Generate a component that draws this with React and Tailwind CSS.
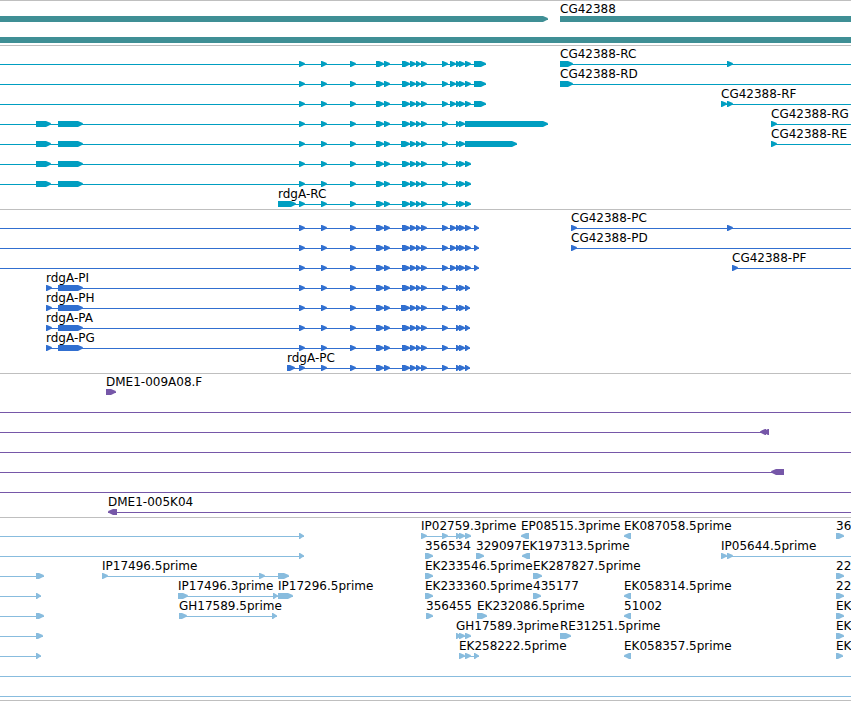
import React from 'react'

// exons shared by every rdgA transcript: [start, end]
const CORE = [[299, 305], [321, 327], [350, 356], [376, 384], [384, 390]]
const MID = [[402, 410], [410, 416], [416, 421], [421, 427], [442, 448]]
const MID_LONG = [[401, 410], ...MID.slice(1)]
const TAIL = [[456, 461], [459, 465]]
const HEAD = [[36, 51], [58, 83]]
const CDS_HEAD = [[46, 52], [58, 83]]

const rdgLong = (last) => ({ exons: [...CORE, ...MID, [450, 456], ...TAIL, [465, 471], last], start: 0 })
const rdg = (last, mid = MID) => ({ start: 0, exons: [...HEAD, ...CORE, ...mid, ...TAIL, last] })
const cds = (label, mid = MID) => ({ label, exons: [...CDS_HEAD, ...CORE, ...mid, ...TAIL, [465, 470]] })
const one = (label, start, end, reverse) => ({ label, exons: [[start, end]], reverse })

// a feature with open: true runs past the right edge of the view
const WHOLE = { start: 0, exons: [], open: true }

const tracks = [
  {
    name: 'gene',
    color: 'fill-[#3f8f95]',
    spacing: 'gap-px pb-0.5',
    rows: [
      [
        { exons: [[0, 548]] },
        { label: 'CG42388', exons: [[560, null]], open: true },
      ],
      [{ exons: [[0, null]], open: true }],
    ],
  },
  {
    name: 'mrna',
    color: 'fill-[#009ec1]',
    spacing: 'pb-0.5',
    rows: [
      [rdgLong([474, 486]), { label: 'CG42388-RC', exons: [[560, 573], [727, 733]], open: true }],
      [rdgLong([474, 486]), { label: 'CG42388-RD', exons: [[560, 573]], open: true }],
      [rdgLong([474, 486]), { label: 'CG42388-RF', exons: [[721, 727], [727, 733]], open: true }],
      [rdg([465, 548]), { label: 'CG42388-RG', exons: [[771, 777]], open: true }],
      [rdg([465, 517], MID_LONG), { label: 'CG42388-RE', exons: [[771, 777]], open: true }],
      [rdg([465, 471])],
      [rdg([465, 471])],
      [{ label: 'rdgA-RC', exons: [[278, 296], ...CORE, ...MID, ...TAIL, [465, 471]] }],
    ],
  },
  {
    name: 'cds',
    color: 'fill-[#316fd0]',
    spacing: 'pb-0.5',
    rows: [
      [rdgLong([474, 479]), { label: 'CG42388-PC', exons: [[571, 577], [727, 733]], open: true }],
      [rdgLong([474, 479]), { label: 'CG42388-PD', exons: [[571, 577]], open: true }],
      [rdgLong([474, 479]), { label: 'CG42388-PF', exons: [[732, 738]], open: true }],
      [cds('rdgA-PI')],
      [cds('rdgA-PH', MID_LONG)],
      [cds('rdgA-PA')],
      [cds('rdgA-PG')],
      [{ label: 'rdgA-PC', exons: [[287, 295], ...CORE, ...MID, ...TAIL, [465, 470]] }],
    ],
  },
  {
    name: 'bac',
    color: 'fill-[#7657a8]',
    spacing: 'pb-0.5',
    rows: [
      [one('DME1-009A08.F', 106, 116)],
      [WHOLE],
      [{ start: 0, exons: [[760, 766], [763, 769]], reverse: true }],
      [WHOLE],
      [{ start: 0, exons: [[771, 784]], reverse: true }],
      [WHOLE],
      [{ label: 'DME1-005K04', exons: [[108, 117]], reverse: true, open: true }],
    ],
  },
  {
    name: 'est',
    color: 'fill-[#88bcde]',
    spacing: 'pb-px',
    rows: [
      [
        { start: 0, exons: [[299, 304]] },
        { label: 'IP02759.3prime', exons: [[421, 427], [442, 448], [456, 461], [459, 465], [465, 471]] },
        one('EP08515.3prime', 521, 529, true),
        one('EK087058.5prime', 624, 631, true),
        one('36', 836, 844),
      ],
      [
        { start: 0, exons: [[299, 304]] },
        one('356534', 425, 433),
        one('329097', 476, 484),
        one('EK197313.5prime', 522, 530, true),
        { label: 'IP05644.5prime', exons: [[721, 727], [727, 733]], open: true },
      ],
      [
        { start: 0, exons: [[36, 44]] },
        { label: 'IP17496.5prime', exons: [[102, 108], [259, 265], [278, 289]] },
        one('EK233546.5prime', 425, 433),
        one('EK287827.5prime', 533, 542),
        one('22', 836, 844),
      ],
      [
        { start: 0, exons: [[36, 41]] },
        { label: 'IP17496.3prime', exons: [[178, 188], [273, 278]] },
        one('IP17296.5prime', 278, 293),
        one('EK233360.5prime', 425, 433),
        one('435177', 533, 541),
        one('EK058314.5prime', 624, 631, true),
        one('22', 836, 844),
      ],
      [
        { start: 0, exons: [[36, 44]] },
        { label: 'GH17589.5prime', exons: [[179, 187], [272, 277]] },
        one('356455', 426, 433),
        one('EK232086.5prime', 477, 487),
        one('51002', 624, 631, true),
        one('EK', 836, 844),
      ],
      [
        { start: 0, exons: [[36, 43]] },
        { label: 'GH17589.3prime', exons: [[456, 461], [459, 465], [465, 471]] },
        one('RE31251.5prime', 560, 571),
        one('EK', 836, 844),
      ],
      [
        { start: 0, exons: [[36, 41]] },
        { label: 'EK258222.5prime', exons: [[459, 465], [465, 471], [474, 479]] },
        one('EK058357.5prime', 624, 631, true),
        one('EK', 836, 843),
      ],
      [WHOLE],
      [WHOLE],
    ],
  },
]

const Exon = ({ start, end, reverse }) => {
  if (end === null) {
    return <rect x={start} y="14" width="100%" height="6" />
  }
  const tip = reverse ? start : end
  const base = reverse ? end : start
  const dir = reverse ? -1 : 1
  const neck = Math.abs(end - start) > 6 ? tip - 5 * dir : base + dir
  const cheek = tip - 2 * dir
  return <path d={`M${base} 14H${neck}L${cheek} 15.2L${tip} 16.4V17.6L${cheek} 18.6L${neck} 20H${base}Z`} />
}

const Feature = ({ label, start, exons, reverse, open }) => {
  const from = start ?? exons[0][0]
  const to = open ? null : exons[exons.length - 1][1]
  return (
    <g>
      <rect x={from} y="17" width={to === null ? '100%' : to - from} height="1" />
      {exons.map(([a, b]) => (
        <Exon key={a} start={a} end={b} reverse={reverse} />
      ))}
      {label && (
        <text x={from} y="11" className="fill-black">
          {label}
        </text>
      )}
    </g>
  )
}

const Track = ({ color, spacing, rows }) => (
  <section className={`flex flex-col border-t border-[#bfbfbf] pt-px ${spacing}`}>
    {rows.map((features, i) => (
      <svg key={i} className={`block h-5 w-full text-xs ${color}`}>
        {features.map((feature, j) => (
          <Feature key={j} {...feature} />
        ))}
      </svg>
    ))}
  </section>
)

const App = () => {
  return (
    <main className="overflow-hidden border-b border-[#bfbfbf] bg-white font-['DejaVu_Sans',sans-serif]">
      {tracks.map((track) => (
        <Track key={track.name} {...track} />
      ))}
    </main>
  )
}

export default App
